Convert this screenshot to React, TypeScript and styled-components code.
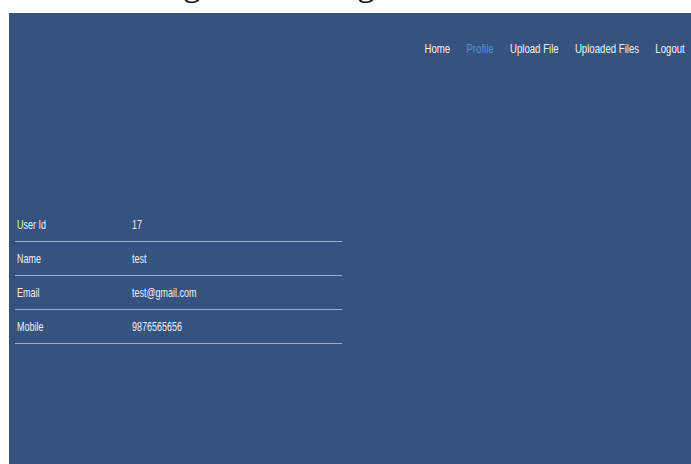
import React from "react";
import styled, { createGlobalStyle } from "styled-components";

const GlobalStyle = createGlobalStyle`
  html, body {
    margin: 0;
    padding: 0;
    background: #ffffff;
    overflow: hidden;
  }
  body {
    font-family: "Liberation Sans", Arial, Helvetica, sans-serif;
  }
`;

const Page = styled.div`
  display: flex;
  flex-direction: column;
  width: 691px;
  height: 464px;
`;

const TitleStrip = styled.div`
  height: 13px;
  overflow: hidden;
  flex: none;
`;

const Title = styled.h1`
  margin: -35px 0 0 0;
  padding-left: 89px;
  font-family: "Liberation Serif", "Times New Roman", serif;
  font-size: 36px;
  font-weight: normal;
  line-height: 36px;
  color: #111;
  white-space: nowrap;
`;

const Panel = styled.main`
  flex: 1;
  margin-left: 9px;
  background: #36527e;
  display: flex;
  flex-direction: column;
`;

const NavBar = styled.nav`
  display: flex;
  justify-content: flex-end;
  padding: 28px 6px 0 0;
`;

/* the menu font is a narrow face: squeeze the regular one horizontally */
const NavList = styled.div`
  display: flex;
  gap: 22px;
  transform: scaleX(0.74);
  transform-origin: right center;
`;

const NavLink = styled.a<{ $active?: boolean }>`
  font-size: 13px;
  line-height: 15px;
  color: ${(p) => (p.$active ? "#4d94d4" : "#f1f3f8")};
  text-decoration: none;
  white-space: nowrap;
`;

const InfoTable = styled.div`
  margin: 152px 0 0 6px;
  width: 327px;
  display: flex;
  flex-direction: column;
`;

const InfoRow = styled.div`
  display: grid;
  grid-template-columns: 117px 1fr;
  height: 33px;
  align-items: center;
  border-bottom: 1px solid #9aaed1;
`;

const Cell = styled.span<{ $label?: boolean }>`
  justify-self: start;
  display: inline-block;
  margin-left: ${(p) => (p.$label ? "2px" : "0")};
  font-size: 13px;
  color: #eef1f7;
  white-space: nowrap;
  transform: scaleX(0.69);
  transform-origin: left center;
`;

const navItems = [
  { label: "Home" },
  { label: "Profile", active: true },
  { label: "Upload File" },
  { label: "Uploaded Files" },
  { label: "Logout" },
];

const profile = [
  ["User Id", "17"],
  ["Name", "test"],
  ["Email", "test@gmail.com"],
  ["Mobile", "9876565656"],
];

export default function App() {
  return (
    <>
      <GlobalStyle />
      <Page>
        <TitleStrip>
          <Title>Sharing Files Using Blockchain</Title>
        </TitleStrip>
        <Panel>
          <NavBar>
            <NavList>
              {navItems.map((item) => (
                <NavLink key={item.label} href="#" $active={item.active}>
                  {item.label}
                </NavLink>
              ))}
            </NavList>
          </NavBar>
          <InfoTable>
            {profile.map(([k, v]) => (
              <InfoRow key={k}>
                <Cell $label>{k}</Cell>
                <Cell>{v}</Cell>
              </InfoRow>
            ))}
          </InfoTable>
        </Panel>
      </Page>
    </>
  );
}
